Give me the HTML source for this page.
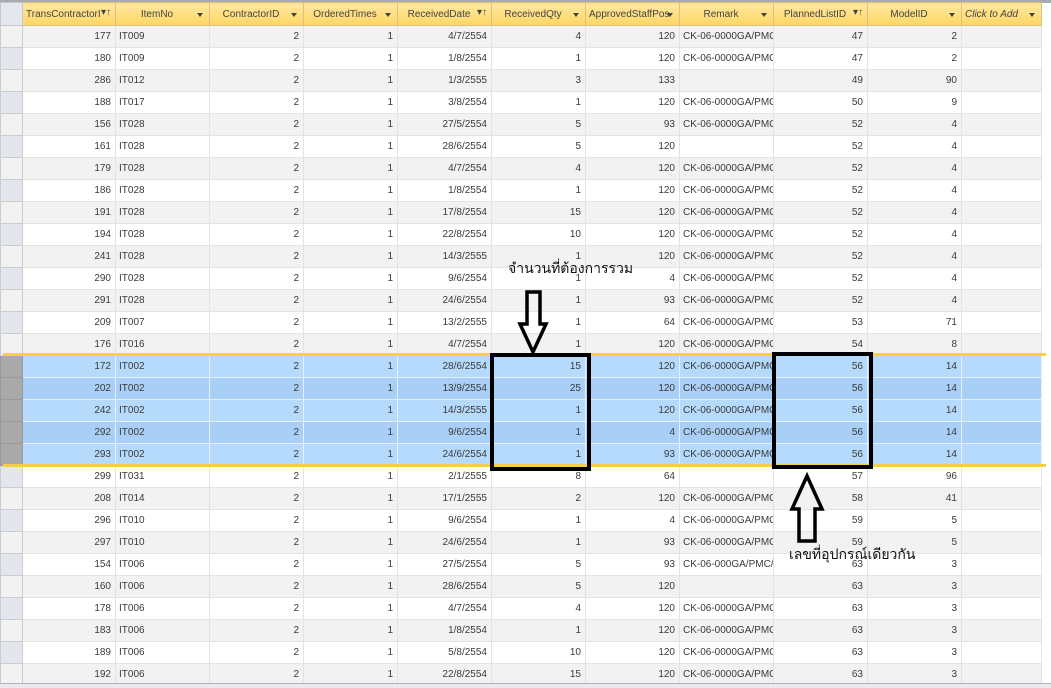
<!DOCTYPE html>
<html><head><meta charset="utf-8"><style>
body{margin:0;width:1051px;height:687px;overflow:hidden;background:#fff;font-family:"Liberation Sans","Noto Sans CJK SC",sans-serif;position:relative}
.top{position:absolute;left:0;top:0;width:1051px;height:3px;background:#a7abb0}
table{position:absolute;left:0;top:2px;border-collapse:collapse;table-layout:fixed;width:1041px;font-size:10px;color:#3a3a3a}
td,th{height:21px;padding:0 4px 0 3px;border:1px solid #e4e4dc;white-space:nowrap;overflow:hidden}
th{height:22px;background:linear-gradient(#ffe7a0,#fdd663);border:1px solid #d9c284;font-weight:normal;color:#444;position:relative;text-align:center;padding-right:14px}
th:after{content:"";position:absolute;right:6px;top:10px;border:3px solid transparent;border-top:4px solid #444}
th.s:after{content:"▾↑";border:0;top:4px;font-size:10px;right:4px}
th.sel{background:#e4e7ec;border-color:#c5c9cf}
th.sel:after{display:none}
td{text-align:right}
td.l{text-align:left}
td.x{background:#e3e6ea;border-color:#c9cdd2}
tr.g td{background:#f2f2f2}
tr.b td{background:#b6dafc;border-color:#e6f0fb}
tr.b2 td{background:#aacff6;border-color:#e6f0fb}
tr.b td.x,tr.b2 td.x{background:#a9a9a9;border-color:#999}
.yl{position:absolute;left:3px;width:1043px;height:3px;background:#f7cf42}
.box{position:absolute;border:4px solid #000;box-sizing:border-box}
.t{position:absolute;font-size:14px;color:#111}
.bot{position:absolute;left:0;top:683px;width:1051px;height:4px;background:#e8eaed;border-top:1px solid #b0b4b9}
</style></head><body>
<div class="top"></div>
<table>
<colgroup><col style="width:22px"><col style="width:93px"><col style="width:94px"><col style="width:94px"><col style="width:94px"><col style="width:94px"><col style="width:94px"><col style="width:94px"><col style="width:94px"><col style="width:94px"><col style="width:94px"><col style="width:80px"></colgroup>
<tr><th class="sel"></th><th class="s" style="text-align:left">TransContractorI</th><th>ItemNo</th><th>ContractorID</th><th>OrderedTimes</th><th class="s">ReceivedDate</th><th>ReceivedQty</th><th style="text-align:left">ApprovedStaffPos</th><th>Remark</th><th class="s">PlannedListID</th><th>ModelID</th><th style="text-align:left;font-style:italic">Click to Add</th></tr>
<tr class="g"><td class="x"></td><td>177</td><td class="l">IT009</td><td>2</td><td>1</td><td>4/7/2554</td><td>4</td><td>120</td><td class="l">CK-06-0000GA/PMC.</td><td>47</td><td>2</td><td></td></tr>
<tr><td class="x"></td><td>180</td><td class="l">IT009</td><td>2</td><td>1</td><td>1/8/2554</td><td>1</td><td>120</td><td class="l">CK-06-0000GA/PMC.</td><td>47</td><td>2</td><td></td></tr>
<tr class="g"><td class="x"></td><td>286</td><td class="l">IT012</td><td>2</td><td>1</td><td>1/3/2555</td><td>3</td><td>133</td><td class="l"></td><td>49</td><td>90</td><td></td></tr>
<tr><td class="x"></td><td>188</td><td class="l">IT017</td><td>2</td><td>1</td><td>3/8/2554</td><td>1</td><td>120</td><td class="l">CK-06-0000GA/PMC.</td><td>50</td><td>9</td><td></td></tr>
<tr class="g"><td class="x"></td><td>156</td><td class="l">IT028</td><td>2</td><td>1</td><td>27/5/2554</td><td>5</td><td>93</td><td class="l">CK-06-0000GA/PMC.</td><td>52</td><td>4</td><td></td></tr>
<tr><td class="x"></td><td>161</td><td class="l">IT028</td><td>2</td><td>1</td><td>28/6/2554</td><td>5</td><td>120</td><td class="l"></td><td>52</td><td>4</td><td></td></tr>
<tr class="g"><td class="x"></td><td>179</td><td class="l">IT028</td><td>2</td><td>1</td><td>4/7/2554</td><td>4</td><td>120</td><td class="l">CK-06-0000GA/PMC.</td><td>52</td><td>4</td><td></td></tr>
<tr><td class="x"></td><td>186</td><td class="l">IT028</td><td>2</td><td>1</td><td>1/8/2554</td><td>1</td><td>120</td><td class="l">CK-06-0000GA/PMC.</td><td>52</td><td>4</td><td></td></tr>
<tr class="g"><td class="x"></td><td>191</td><td class="l">IT028</td><td>2</td><td>1</td><td>17/8/2554</td><td>15</td><td>120</td><td class="l">CK-06-0000GA/PMC.</td><td>52</td><td>4</td><td></td></tr>
<tr><td class="x"></td><td>194</td><td class="l">IT028</td><td>2</td><td>1</td><td>22/8/2554</td><td>10</td><td>120</td><td class="l">CK-06-0000GA/PMC.</td><td>52</td><td>4</td><td></td></tr>
<tr class="g"><td class="x"></td><td>241</td><td class="l">IT028</td><td>2</td><td>1</td><td>14/3/2555</td><td>1</td><td>120</td><td class="l">CK-06-0000GA/PMC.</td><td>52</td><td>4</td><td></td></tr>
<tr><td class="x"></td><td>290</td><td class="l">IT028</td><td>2</td><td>1</td><td>9/6/2554</td><td>1</td><td>4</td><td class="l">CK-06-0000GA/PMC.</td><td>52</td><td>4</td><td></td></tr>
<tr class="g"><td class="x"></td><td>291</td><td class="l">IT028</td><td>2</td><td>1</td><td>24/6/2554</td><td>1</td><td>93</td><td class="l">CK-06-0000GA/PMC.</td><td>52</td><td>4</td><td></td></tr>
<tr><td class="x"></td><td>209</td><td class="l">IT007</td><td>2</td><td>1</td><td>13/2/2555</td><td>1</td><td>64</td><td class="l">CK-06-0000GA/PMC.</td><td>53</td><td>71</td><td></td></tr>
<tr class="g"><td class="x"></td><td>176</td><td class="l">IT016</td><td>2</td><td>1</td><td>4/7/2554</td><td>1</td><td>120</td><td class="l">CK-06-0000GA/PMC.</td><td>54</td><td>8</td><td></td></tr>
<tr class="b"><td class="x"></td><td>172</td><td class="l">IT002</td><td>2</td><td>1</td><td>28/6/2554</td><td>15</td><td>120</td><td class="l">CK-06-0000GA/PMC.</td><td>56</td><td>14</td><td></td></tr>
<tr class="b2"><td class="x"></td><td>202</td><td class="l">IT002</td><td>2</td><td>1</td><td>13/9/2554</td><td>25</td><td>120</td><td class="l">CK-06-0000GA/PMC.</td><td>56</td><td>14</td><td></td></tr>
<tr class="b"><td class="x"></td><td>242</td><td class="l">IT002</td><td>2</td><td>1</td><td>14/3/2555</td><td>1</td><td>120</td><td class="l">CK-06-0000GA/PMC.</td><td>56</td><td>14</td><td></td></tr>
<tr class="b2"><td class="x"></td><td>292</td><td class="l">IT002</td><td>2</td><td>1</td><td>9/6/2554</td><td>1</td><td>4</td><td class="l">CK-06-0000GA/PMC.</td><td>56</td><td>14</td><td></td></tr>
<tr class="b"><td class="x"></td><td>293</td><td class="l">IT002</td><td>2</td><td>1</td><td>24/6/2554</td><td>1</td><td>93</td><td class="l">CK-06-0000GA/PMC.</td><td>56</td><td>14</td><td></td></tr>
<tr><td class="x"></td><td>299</td><td class="l">IT031</td><td>2</td><td>1</td><td>2/1/2555</td><td>8</td><td>64</td><td class="l"></td><td>57</td><td>96</td><td></td></tr>
<tr class="g"><td class="x"></td><td>208</td><td class="l">IT014</td><td>2</td><td>1</td><td>17/1/2555</td><td>2</td><td>120</td><td class="l">CK-06-0000GA/PMC.</td><td>58</td><td>41</td><td></td></tr>
<tr><td class="x"></td><td>296</td><td class="l">IT010</td><td>2</td><td>1</td><td>9/6/2554</td><td>1</td><td>4</td><td class="l">CK-06-0000GA/PMC.</td><td>59</td><td>5</td><td></td></tr>
<tr class="g"><td class="x"></td><td>297</td><td class="l">IT010</td><td>2</td><td>1</td><td>24/6/2554</td><td>1</td><td>93</td><td class="l">CK-06-0000GA/PMC.</td><td>59</td><td>5</td><td></td></tr>
<tr><td class="x"></td><td>154</td><td class="l">IT006</td><td>2</td><td>1</td><td>27/5/2554</td><td>5</td><td>93</td><td class="l">CK-06-000GA/PMC/0</td><td>63</td><td>3</td><td></td></tr>
<tr class="g"><td class="x"></td><td>160</td><td class="l">IT006</td><td>2</td><td>1</td><td>28/6/2554</td><td>5</td><td>120</td><td class="l"></td><td>63</td><td>3</td><td></td></tr>
<tr><td class="x"></td><td>178</td><td class="l">IT006</td><td>2</td><td>1</td><td>4/7/2554</td><td>4</td><td>120</td><td class="l">CK-06-0000GA/PMC.</td><td>63</td><td>3</td><td></td></tr>
<tr class="g"><td class="x"></td><td>183</td><td class="l">IT006</td><td>2</td><td>1</td><td>1/8/2554</td><td>1</td><td>120</td><td class="l">CK-06-0000GA/PMC.</td><td>63</td><td>3</td><td></td></tr>
<tr><td class="x"></td><td>189</td><td class="l">IT006</td><td>2</td><td>1</td><td>5/8/2554</td><td>10</td><td>120</td><td class="l">CK-06-0000GA/PMC.</td><td>63</td><td>3</td><td></td></tr>
<tr class="g"><td class="x"></td><td>192</td><td class="l">IT006</td><td>2</td><td>1</td><td>22/8/2554</td><td>15</td><td>120</td><td class="l">CK-06-0000GA/PMC.</td><td>63</td><td>3</td><td></td></tr>
</table>
<div class="yl" style="top:353px"></div>
<div class="yl" style="top:464px"></div>
<div class="box" style="left:490px;top:353px;width:101px;height:118px"></div>
<div class="box" style="left:772px;top:352px;width:101px;height:117px"></div>
<svg style="position:absolute;left:0;top:0" width="1051" height="687">
<path d="M527 292 H540 V324 H546 L533 352 L520 324 H527 Z" fill="none" stroke="#000" stroke-width="3.5" stroke-linejoin="miter"/>
<path d="M799 541 H815 V509 H822 L807 476 L792 509 H799 Z" fill="none" stroke="#000" stroke-width="3.5" stroke-linejoin="miter"/>
</svg>
<div class="t" style="left:508px;top:258px">จำนวนที่ต้องการรวม</div>
<div class="t" style="left:789px;top:544px">เลขที่อุปกรณ์เดียวกัน</div>
<div class="bot"></div>
</body></html>
